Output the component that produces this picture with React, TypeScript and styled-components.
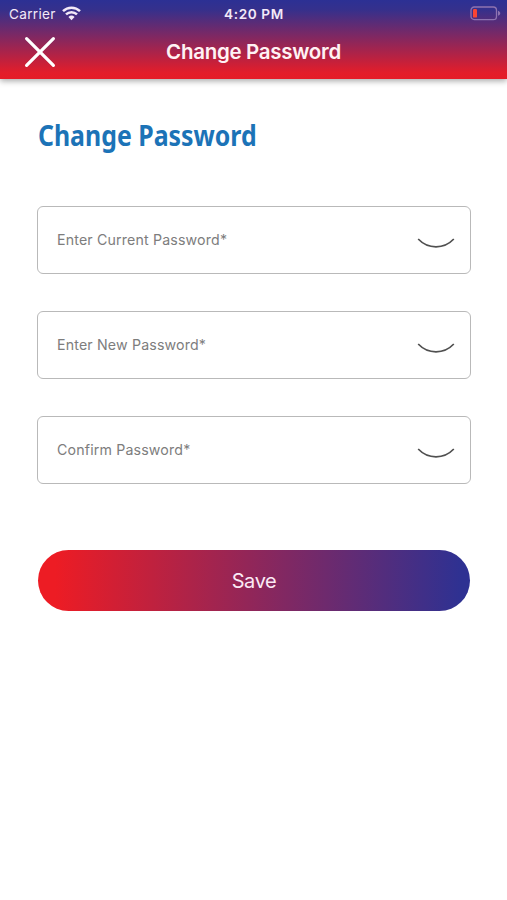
import React from "react";
import styled, { createGlobalStyle } from "styled-components";

const GlobalStyle = createGlobalStyle`
  * { box-sizing: border-box; }
  body { margin: 0; background: #fff; font-family: Inter, sans-serif; }
`;

const Screen = styled.div`
  min-height: 900px;
  background: #fff;
`;

const Header = styled.header`
  height: 79px;
  background: linear-gradient(180deg, #2c3094 0%, #35308c 12%, #e31d2a 92%, #e51c27 100%);
  box-shadow: 0 2px 6px rgba(0, 0, 0, 0.35);
  color: #fff;
`;

const StatusBar = styled.div`
  display: grid;
  grid-template-columns: 1fr auto 1fr;
  align-items: center;
  height: 27px;
  padding: 0 6px 0 9px;
  color: #f3e9f8;
`;

const Carrier = styled.div`
  display: flex;
  align-items: center;
  gap: 6px;
  font-size: 13.6px;
  letter-spacing: 0.3px;
`;

const Clock = styled.div`
  margin-left: -2px;
  font-size: 13.6px;
  font-weight: 600;
  letter-spacing: 0.6px;
`;

const BatterySlot = styled.div`
  display: flex;
  justify-content: flex-end;
`;

const NavBar = styled.div`
  display: grid;
  grid-template-columns: 1fr auto 1fr;
  align-items: center;
  height: 50px;
`;

const CloseButton = styled.button`
  display: flex;
  width: 32px;
  margin-left: 24px;
  padding: 0;
  border: 0;
  background: none;
  color: #fff;
`;

const NavTitle = styled.h1`
  margin: 0;
  font-size: 20.5px;
  font-weight: 600;
  line-height: 28px;
  letter-spacing: -0.3px;
  color: #fff2f4;
`;

const Content = styled.main`
  padding: 37px 36px 0 37px;
`;

const Heading = styled.h2`
  width: max-content;
  margin: 0 0 0 1px;
  font: 700 28px/38px "Noto Sans", sans-serif;
  color: #1c73b7;
  transform: scaleX(0.888);
  transform-origin: left;
`;

const Form = styled.form`
  display: flex;
  flex-direction: column;
  gap: 37px;
  margin-top: 52px;
`;

const Field = styled.label`
  display: flex;
  align-items: center;
  justify-content: space-between;
  height: 68px;
  padding: 0 15px 0 19px;
  border: 1.5px solid #b9b9b9;
  border-radius: 6px;

  svg {
    margin-top: 5px;
  }
`;

const FieldLabel = styled.span`
  padding-bottom: 2px;
  font-size: 14.2px;
  letter-spacing: 0.16px;
  color: #7d7d7d;
`;

const SaveButton = styled.button`
  height: 61px;
  margin: 29px 1px 0;
  padding: 0;
  border: 0;
  border-radius: 31px;
  background: linear-gradient(90deg, #ed1c24 0%, #ed1c24 4%, #2e3192 98%);
  font: 400 20px/24px Inter, sans-serif;
  letter-spacing: -0.4px;
  color: #fbeaf5;
`;

const WifiIcon = () => (
  <svg width="19" height="15" viewBox="0 0 19 15" fill="none" stroke="currentColor" strokeWidth="2.5">
    <path d="M1 5.2a12.2 12.2 0 0 1 17 0" />
    <path d="M4 8.4a7.9 7.9 0 0 1 11 0" />
    <path d="m6.4 10.9 3.1 3.3 3.1-3.3a4.6 4.6 0 0 0-6.2 0Z" fill="currentColor" stroke="none" />
  </svg>
);

const BatteryIcon = () => (
  <svg width="31" height="15" viewBox="0 0 31 15">
    <rect x="1" y="1" width="25.5" height="12.6" rx="3.2" fill="none" stroke="#8e73b1" strokeWidth="1.3" />
    <rect x="3" y="3" width="4" height="8.6" rx="1.2" fill="#fa4434" />
    <path d="M28 4.8c3 1.2 3 3.9 0 5Z" fill="#8e73b1" />
  </svg>
);

const CloseIcon = () => (
  <svg width="32" height="32" viewBox="0 0 32 32" fill="none" stroke="currentColor" strokeWidth="3.2" strokeLinecap="round">
    <path d="M2.6 2.6 29.4 29.4M29.4 2.6 2.6 29.4" />
  </svg>
);

const ClosedEyeIcon = () => (
  <svg width="38" height="12" viewBox="0 0 38 12" fill="none" stroke="#505050" strokeWidth="1.7">
    <path d="M1.2 2c9.8 10.4 25.8 10.4 35.6 0" />
  </svg>
);

const fields = ["Enter Current Password*", "Enter New Password*", "Confirm Password*"];

export default function App() {
  return (
    <Screen>
      <GlobalStyle />
      <Header>
        <StatusBar>
          <Carrier>
            Carrier
            <WifiIcon />
          </Carrier>
          <Clock>4:20 PM</Clock>
          <BatterySlot>
            <BatteryIcon />
          </BatterySlot>
        </StatusBar>
        <NavBar>
          <CloseButton type="button" aria-label="Close">
            <CloseIcon />
          </CloseButton>
          <NavTitle>Change Password</NavTitle>
        </NavBar>
      </Header>
      <Content>
        <Heading>Change Password</Heading>
        <Form>
          {fields.map((label) => (
            <Field key={label}>
              <FieldLabel>{label}</FieldLabel>
              <ClosedEyeIcon />
            </Field>
          ))}
          <SaveButton type="button">Save</SaveButton>
        </Form>
      </Content>
    </Screen>
  );
}
